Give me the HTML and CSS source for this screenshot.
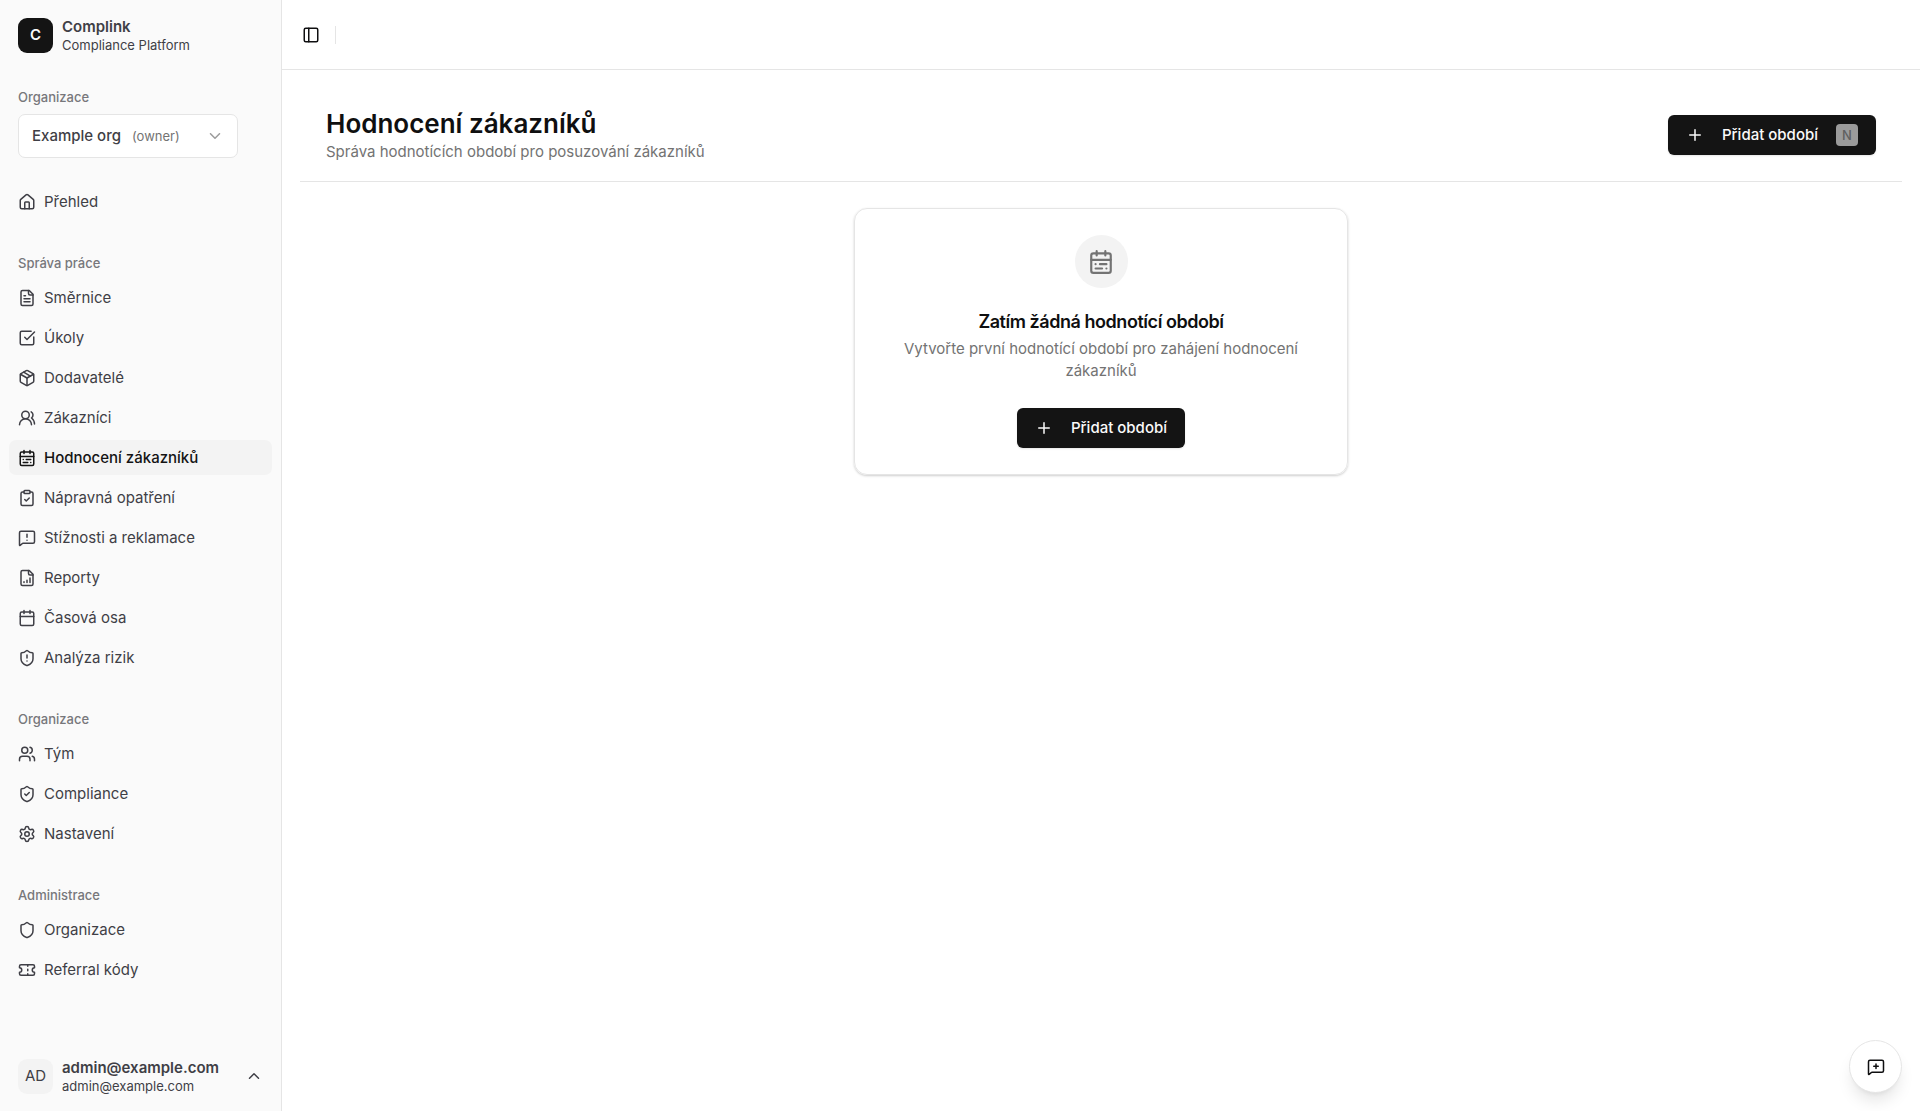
FILE: index.html
```html
<!DOCTYPE html>
<html lang="cs">
<head>
  <meta charset="UTF-8">
  <meta name="viewport" content="width=device-width, initial-scale=1.0">
  <title>Hodnocení zákazníků | Complink</title>
  <link rel="stylesheet" href="styles.css">
</head>
<body>
  <!-- Shared icons -->
  <svg class="sprite" aria-hidden="true">
    <symbol id="calendar-list" viewBox="0 0 24 24">
      <path d="M8 2v4M16 2v4M3 10h18"/><rect x="3" y="4" width="18" height="18" rx="2"/>
      <path d="M17 14h-6M13 18H7M7 14h.01M17 18h.01"/>
    </symbol>
    <symbol id="plus" viewBox="0 0 24 24"><path d="M5 12h14M12 5v14"/></symbol>
    <symbol id="shield" viewBox="0 0 24 24">
      <path d="M20 13c0 5-3.5 7.5-7.66 8.95a1 1 0 0 1-.67-.01C7.5 20.5 4 18 4 13V6a1 1 0 0 1 1-1c2 0 4.5-1.2 6.24-2.72a1.17 1.17 0 0 1 1.52 0C14.51 3.81 17 5 19 5a1 1 0 0 1 1 1z"/>
    </symbol>
    <symbol id="file" viewBox="0 0 24 24">
      <path d="M15 2H6a2 2 0 0 0-2 2v16a2 2 0 0 0 2 2h12a2 2 0 0 0 2-2V7Z"/><path d="M14 2v4a2 2 0 0 0 2 2h4"/>
    </symbol>
  </svg>

  <aside class="sidebar">
    <a class="brand" href="#">
      <span class="brand-logo">C</span>
      <span class="two-lines">
        <strong>Complink</strong>
        <small>Compliance Platform</small>
      </span>
    </a>

    <div class="sidebar-content">
      <div class="group">
        <label class="group-label" for="org">Organizace</label>
        <div class="org-select">
          <select id="org">
            <option>Example org</option>
          </select>
          <span class="org-role">(owner)</span>
          <svg class="icon org-chevron" viewBox="0 0 24 24"><path d="m6 9 6 6 6-6"/></svg>
        </div>
      </div>

      <nav class="group">
        <a class="item" href="#">
          <svg class="icon" viewBox="0 0 24 24"><path d="M15 21v-8a1 1 0 0 0-1-1h-4a1 1 0 0 0-1 1v8"/><path d="M3 10a2 2 0 0 1 .709-1.528l7-5.999a2 2 0 0 1 2.582 0l7 5.999A2 2 0 0 1 21 10v9a2 2 0 0 1-2 2H5a2 2 0 0 1-2-2z"/></svg>
          Přehled
        </a>
      </nav>

      <nav class="group">
        <h2 class="group-label">Správa práce</h2>
        <div class="items">
          <a class="item" href="#">
            <svg class="icon" viewBox="0 0 24 24"><use href="#file"/><path d="M10 9H8M16 13H8M16 17H8"/></svg>
            Směrnice
          </a>
          <a class="item" href="#">
            <svg class="icon" viewBox="0 0 24 24"><path d="M21 10.5V19a2 2 0 0 1-2 2H5a2 2 0 0 1-2-2V5a2 2 0 0 1 2-2h12.5"/><path d="m9 11 3 3L22 4"/></svg>
            Úkoly
          </a>
          <a class="item" href="#">
            <svg class="icon" viewBox="0 0 24 24"><path d="M11 21.73a2 2 0 0 0 2 0l7-4A2 2 0 0 0 21 16V8a2 2 0 0 0-1-1.73l-7-4a2 2 0 0 0-2 0l-7 4A2 2 0 0 0 3 8v8a2 2 0 0 0 1 1.73z"/><path d="M12 22V12"/><path d="M3.29 7 12 12l8.71-5"/><path d="m7.5 4.27 9 5.15"/></svg>
            Dodavatelé
          </a>
          <a class="item" href="#">
            <svg class="icon" viewBox="0 0 24 24"><path d="M18 21a8 8 0 0 0-16 0"/><circle cx="10" cy="8" r="5"/><path d="M22 20c0-3.37-2-6.5-4-8a5 5 0 0 0-.45-8.3"/></svg>
            Zákazníci
          </a>
          <a class="item active" href="#" aria-current="page">
            <svg class="icon"><use href="#calendar-list"/></svg>
            Hodnocení zákazníků
          </a>
          <a class="item" href="#">
            <svg class="icon" viewBox="0 0 24 24"><rect x="8" y="2" width="8" height="4" rx="1"/><path d="M16 4h2a2 2 0 0 1 2 2v14a2 2 0 0 1-2 2H6a2 2 0 0 1-2-2V6a2 2 0 0 1 2-2h2"/><path d="m9 14 2 2 4-4"/></svg>
            Nápravná opatření
          </a>
          <a class="item" href="#">
            <svg class="icon" viewBox="0 0 24 24"><path d="M22 17a2 2 0 0 1-2 2H6.828a2 2 0 0 0-1.414.586l-2.202 2.202A.71.71 0 0 1 2 21.286V5a2 2 0 0 1 2-2h16a2 2 0 0 1 2 2z"/><path d="M12 7v4M12 15h.01"/></svg>
            Stížnosti a reklamace
          </a>
          <a class="item" href="#">
            <svg class="icon" viewBox="0 0 24 24"><use href="#file"/><path d="M8 18v-1M12 18v-3M16 18v-6"/></svg>
            Reporty
          </a>
          <a class="item" href="#">
            <svg class="icon" viewBox="0 0 24 24"><path d="M8 2v4M16 2v4M3 10h18"/><rect x="3" y="4" width="18" height="18" rx="2"/></svg>
            Časová osa
          </a>
          <a class="item" href="#">
            <svg class="icon" viewBox="0 0 24 24"><use href="#shield"/><path d="M12 8v4M12 16h.01"/></svg>
            Analýza rizik
          </a>
        </div>
      </nav>

      <nav class="group">
        <h2 class="group-label">Organizace</h2>
        <div class="items">
          <a class="item" href="#">
            <svg class="icon" viewBox="0 0 24 24"><path d="M16 21v-2a4 4 0 0 0-4-4H6a4 4 0 0 0-4 4v2"/><circle cx="9" cy="7" r="4"/><path d="M22 21v-2a4 4 0 0 0-3-3.87M16 3.13a4 4 0 0 1 0 7.75"/></svg>
            Tým
          </a>
          <a class="item" href="#">
            <svg class="icon" viewBox="0 0 24 24"><use href="#shield"/><path d="m9 12 2 2 4-4"/></svg>
            Compliance
          </a>
          <a class="item" href="#">
            <svg class="icon" viewBox="0 0 24 24"><path d="M9.671 4.136a2.34 2.34 0 0 1 4.659 0 2.34 2.34 0 0 0 3.319 1.915 2.34 2.34 0 0 1 2.33 4.033 2.34 2.34 0 0 0 0 3.831 2.34 2.34 0 0 1-2.33 4.033 2.34 2.34 0 0 0-3.319 1.915 2.34 2.34 0 0 1-4.659 0 2.34 2.34 0 0 0-3.32-1.915 2.34 2.34 0 0 1-2.33-4.033 2.34 2.34 0 0 0 0-3.831A2.34 2.34 0 0 1 6.35 6.051a2.34 2.34 0 0 0 3.319-1.915"/><circle cx="12" cy="12" r="3"/></svg>
            Nastavení
          </a>
        </div>
      </nav>

      <nav class="group">
        <h2 class="group-label">Administrace</h2>
        <div class="items">
          <a class="item" href="#">
            <svg class="icon"><use href="#shield"/></svg>
            Organizace
          </a>
          <a class="item" href="#">
            <svg class="icon" viewBox="0 0 24 24"><path d="M2 9a3 3 0 0 1 0 6v2a2 2 0 0 0 2 2h16a2 2 0 0 0 2-2v-2a3 3 0 0 1 0-6V7a2 2 0 0 0-2-2H4a2 2 0 0 0-2 2Z"/><path d="M13 5v2M13 17v2M13 11v2"/></svg>
            Referral kódy
          </a>
        </div>
      </nav>
    </div>

    <button class="user" type="button">
      <span class="avatar">AD</span>
      <span class="two-lines">
        <strong>admin@example.com</strong>
        <small>admin@example.com</small>
      </span>
      <svg class="icon" viewBox="0 0 24 24"><path d="m18 15-6-6-6 6"/></svg>
    </button>
  </aside>

  <div class="page">
    <header class="topbar">
      <button class="toggle" type="button" aria-label="Přepnout postranní panel">
        <svg class="icon" viewBox="0 0 24 24"><rect x="3" y="3" width="18" height="18" rx="2"/><path d="M9 3v18"/></svg>
      </button>
      <span class="separator"></span>
    </header>

    <main>
      <div class="page-header">
        <div>
          <h1>Hodnocení zákazníků</h1>
          <p>Správa hodnotících období pro posuzování zákazníků</p>
        </div>
        <button class="btn" type="button">
          <svg class="icon"><use href="#plus"/></svg>
          Přidat období
          <kbd>N</kbd>
        </button>
      </div>

      <section class="empty-card">
        <div class="empty-icon"><svg class="icon"><use href="#calendar-list"/></svg></div>
        <h3>Zatím žádná hodnotící období</h3>
        <p>Vytvořte první hodnotící období pro zahájení hodnocení zákazníků</p>
        <button class="btn" type="button">
          <svg class="icon"><use href="#plus"/></svg>
          Přidat období
        </button>
      </section>
    </main>
  </div>

  <button class="feedback" type="button" aria-label="Zpětná vazba">
    <svg class="icon" viewBox="0 0 24 24"><path d="M22 17a2 2 0 0 1-2 2H6.828a2 2 0 0 0-1.414.586l-2.202 2.202A.71.71 0 0 1 2 21.286V5a2 2 0 0 1 2-2h16a2 2 0 0 1 2 2z"/><path d="M12 8v6M9 11h6"/></svg>
  </button>
</body>
</html>
```
FILE: styles.css
```css
* { margin: 0; padding: 0; box-sizing: border-box; }
body {
  display: flex;
  min-height: 100vh;
  background: #fff;
  color: #0f0f10;
  font-family: Inter, sans-serif;
  font-size: 15px;
  line-height: 22px;
}
a { color: inherit; text-decoration: none; }
button, select { font: inherit; color: inherit; border: none; background: none; cursor: pointer; }

.sprite { display: none; }
.icon {
  width: 18px;
  height: 18px;
  flex-shrink: 0;
  fill: none;
  stroke: currentColor;
  stroke-width: 2;
  stroke-linecap: round;
  stroke-linejoin: round;
}

/* Sidebar */
.sidebar {
  position: sticky;
  top: 0;
  display: flex;
  flex-direction: column;
  flex-shrink: 0;
  width: 282px;
  height: 100vh;
  background: #fafafa;
  border-right: 1px solid #e5e5e5;
  color: #3f3f46;
}
.brand, .user {
  display: flex;
  align-items: center;
  gap: 9px;
  height: 70px;
  padding: 0 18px;
  text-align: left;
}
.brand-logo, .avatar {
  display: flex;
  align-items: center;
  justify-content: center;
  width: 35px;
  height: 35px;
  flex-shrink: 0;
  border-radius: 9px;
}
.brand-logo { background: #141414; color: #fafafa; font-weight: 600; }
.avatar { background: #f3f3f3; }
.two-lines { flex: 1; display: flex; flex-direction: column; min-width: 0; }
.two-lines strong { font-weight: 600; line-height: 19px; }
.two-lines small { font-size: 13px; line-height: 18px; }

.sidebar-content {
  flex: 1;
  display: flex;
  flex-direction: column;
  gap: 8px;
  min-height: 0;
  overflow: hidden;
}
.group { padding: 9px; }
.group-label {
  display: flex;
  align-items: center;
  height: 35px;
  padding: 0 9px;
  font-size: 13px;
  font-weight: 500;
  color: #77777b;
}
.items { display: flex; flex-direction: column; gap: 5px; }
.item {
  display: flex;
  align-items: center;
  gap: 8px;
  height: 35px;
  padding: 0 9px;
  border-radius: 7px;
}
.item:hover, .item.active { background: #f3f3f3; }
.item.active { font-weight: 500; color: #141414; }

.org-select { position: relative; width: 220px; margin-left: 9px; }
.org-select select {
  width: 100%;
  height: 44px;
  padding: 0 13px;
  appearance: none;
  background: #fff;
  border: 1px solid #e5e5e5;
  border-radius: 7px;
  font-weight: 500;
}
.org-role, .org-chevron { position: absolute; top: 50%; transform: translateY(-50%); pointer-events: none; color: #737373; }
.org-role { left: 114px; font-size: 13px; }
.org-chevron { right: 14px; opacity: 0.7; }

/* Page */
.page { flex: 1; min-width: 0; }
.topbar {
  display: flex;
  align-items: center;
  gap: 8px;
  height: 70px;
  padding: 0 13px;
  border-bottom: 1px solid #e5e5e5;
}
.toggle { display: flex; align-items: center; justify-content: center; width: 32px; height: 32px; }
.separator { width: 1px; height: 18px; background: #e5e5e5; }
main { padding: 18px; }

.page-header {
  display: flex;
  align-items: center;
  justify-content: space-between;
  padding: 18px 26px;
  margin-bottom: 26px;
  border-bottom: 1px solid #e5e5e5;
}
.page-header h1 { font-size: 26px; font-weight: 600; line-height: 35px; }
.page-header p, .empty-card p { color: #737373; }

.btn {
  display: flex;
  align-items: center;
  gap: 18px;
  height: 40px;
  padding: 0 18px;
  background: #141414;
  color: #fafafa;
  border-radius: 6px;
  font-weight: 500;
  box-shadow: 0 1px 2px rgba(0,0,0,0.1);
}
kbd {
  width: 22px;
  height: 22px;
  border-radius: 4px;
  background: #9b9b9b;
  color: #5f5f5f;
  font-family: inherit;
  font-size: 13px;
  line-height: 22px;
}

.empty-card {
  display: flex;
  flex-direction: column;
  align-items: center;
  max-width: 494px;
  margin: 0 auto;
  padding: 26px;
  border: 1px solid #e5e5e5;
  border-radius: 13px;
  text-align: center;
  box-shadow: 0 1px 3px rgba(0,0,0,0.1), 0 1px 2px rgba(0,0,0,0.1);
}
.empty-icon {
  display: flex;
  align-items: center;
  justify-content: center;
  width: 53px;
  height: 53px;
  margin-bottom: 20px;
  border-radius: 50%;
  background: #f3f3f3;
  color: #737373;
}
.empty-icon .icon { width: 26px; height: 26px; }
.empty-card h3 { font-size: 18px; font-weight: 600; line-height: 28px; letter-spacing: -0.025em; }
.empty-card p { margin: 2px 0 26px; }

.feedback {
  position: fixed;
  right: 18px;
  bottom: 18px;
  display: flex;
  align-items: center;
  justify-content: center;
  width: 53px;
  height: 53px;
  border: 1px solid #e5e5e5;
  border-radius: 50%;
  background: #fff;
  box-shadow: 0 11px 16px -3px rgba(0,0,0,0.1), 0 4px 6px -4px rgba(0,0,0,0.1);
}
```
